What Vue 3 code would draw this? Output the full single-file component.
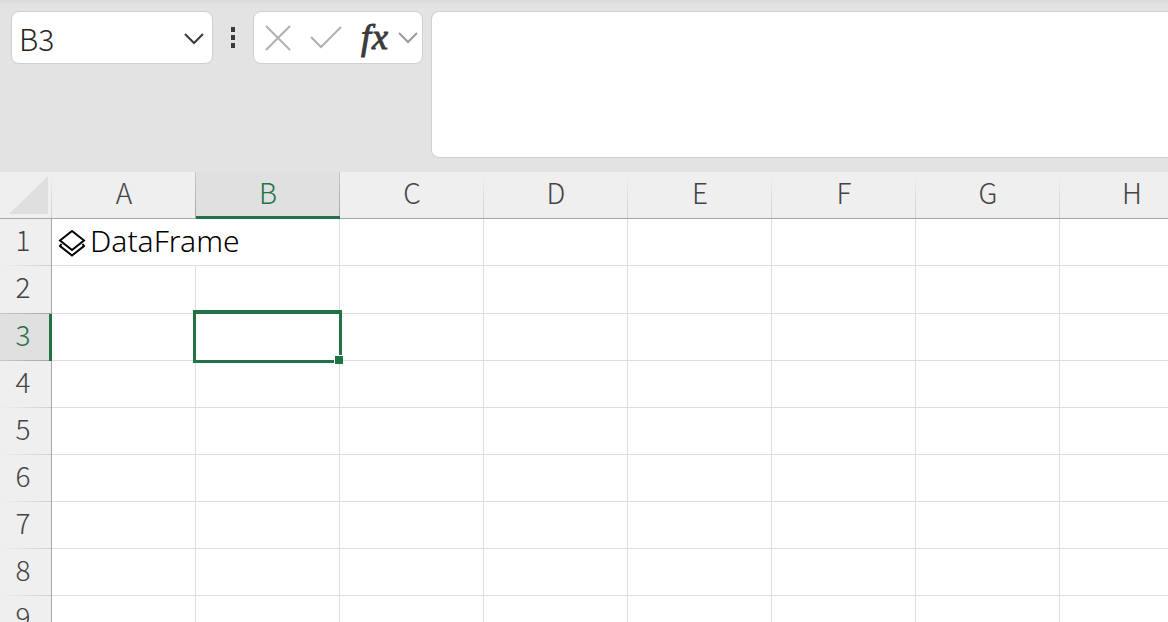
<script setup>
import { ref } from 'vue'

const columns = ['A', 'B', 'C', 'D', 'E', 'F', 'G', 'H']
const rows = [1, 2, 3, 4, 5, 6, 7, 8, 9]
const active = { column: 'B', row: 3 }
const cellName = ref('B3')
const formula = ref('')
</script>

<template>
  <main class="app">
    <header class="bar">
      <div class="name-box">
        <input v-model="cellName" class="name-input" type="text" aria-label="Name box" />
        <button class="icon-button name-toggle" type="button" aria-label="Show names">
          <svg width="22" height="14" viewBox="0 0 22 14"><path d="M2 2l9 9 9-9" fill="none" stroke="#3b3b3b" stroke-width="2" /></svg>
        </button>
      </div>
      <svg class="grip" width="6" height="22" viewBox="0 0 6 22"><path d="M1 0h4v5h-4zM1 8h4v5h-4zM1 16h4v5h-4z" fill="#3b3b3b" /></svg>
      <div class="actions">
        <button class="icon-button" type="button" aria-label="Cancel">
          <svg width="26" height="26" viewBox="0 0 26 26"><path d="M1 1l24 24M25 1L1 25" fill="none" stroke="#b0b0b0" stroke-width="2" /></svg>
        </button>
        <button class="icon-button" type="button" aria-label="Enter">
          <svg width="34" height="26" viewBox="0 0 34 26"><path d="M2 12l10 10L32 2" fill="none" stroke="#b0b0b0" stroke-width="2" /></svg>
        </button>
        <button class="icon-button fx" type="button" aria-label="Insert function"><span>f</span><span>x</span></button>
        <button class="icon-button more" type="button" aria-label="More functions">
          <svg width="20" height="14" viewBox="0 0 20 14"><path d="M1 2l9 9 9-9" fill="none" stroke="#9a9a9a" stroke-width="2" /></svg>
        </button>
      </div>
      <textarea v-model="formula" class="formula" aria-label="Formula bar"></textarea>
    </header>

    <table class="sheet">
      <thead>
        <tr>
          <th class="corner">
            <svg width="40" height="40" viewBox="0 0 40 40"><path d="M40 1v38H1z" fill="#dfdfdf" /></svg>
          </th>
          <th v-for="c in columns" :key="c" class="column" scope="col" :class="{ current: c === active.column, before: c === 'A' }">{{ c }}</th>
        </tr>
      </thead>
      <tbody>
        <tr v-for="r in rows" :key="r">
          <th class="row" scope="row" :class="{ current: r === active.row, before: r === active.row - 1 }">{{ r }}</th>
          <td v-for="c in columns" :key="c" :class="{ spill: r === 1 && c === 'A', active: r === active.row && c === active.column }">
            <div v-if="r === 1 && c === 'A'" class="object">
              <svg width="28" height="30" viewBox="0 0 28 30"><path d="M14 3l12 9.500-12 9.500-12-9.500zM3.500 16l-1.500 2 12 9.500 12-9.500-1.500-2" fill="none" stroke="#000" stroke-width="2" /></svg>
              <span class="label">DataFrame</span>
            </div>
            <div v-if="r === active.row && c === active.column" class="selection"><i class="handle"></i></div>
          </td>
        </tr>
      </tbody>
    </table>
  </main>
</template>

<style>
body {
  margin: 0;
}
</style>

<style scoped>
.app {
  height: 100vh;
  overflow: hidden;
  background: #fff;
  color: #444;
  font-family: "Noto Sans CJK JP", "Noto Sans", sans-serif;
  font-size: 28px;
  font-weight: 300;
}
.bar {
  display: flex;
  align-items: flex-start;
  box-sizing: border-box;
  height: 172px;
  padding: 11px 0 14px 11px;
  background: linear-gradient(#dadada, #e3e3e3 5px);
}
.name-box,
.actions {
  display: flex;
  align-items: center;
  box-sizing: border-box;
  height: 53px;
  border: 1px solid #d0d0d0;
  border-radius: 8px;
  background: #fff;
}
.name-box {
  width: 202px;
  padding: 0 7px;
}
.name-input {
  flex: 1;
  min-width: 0;
  height: 40px;
  padding: 0;
  border: 0;
  outline: 0;
  background: none;
  color: #262626;
  font: inherit;
  font-size: 30px;
}
.name-toggle {
  margin-top: 2px;
}
.icon-button {
  display: flex;
  padding: 0;
  border: 0;
  background: none;
}
.grip {
  margin: 16px 17px 0;
}
.actions {
  width: 170px;
  padding: 0 2px 0 11px;
  gap: 18px;
}
.fx {
  gap: 1px;
  margin-bottom: 2px;
  color: #3b3b3b;
  font: italic 400 36px/40px "Liberation Serif", serif;
  -webkit-text-stroke: 1px #3b3b3b;
}
.actions .more {
  margin-left: -8px;
}
.formula {
  flex: 1;
  box-sizing: border-box;
  height: 147px;
  margin-left: 8px;
  padding: 8px;
  border: 1px solid #d0d0d0;
  border-right: 0;
  border-radius: 8px 0 0 8px;
  outline: 0;
  resize: none;
  background: #fff;
  font: inherit;
}
.sheet {
  width: 1204px;
  border-spacing: 0;
  table-layout: fixed;
}
.sheet th,
.sheet td {
  box-sizing: border-box;
  height: 47px;
  padding: 0;
  font-weight: 300;
  line-height: 36px;
}
.sheet tbody tr:nth-child(2) > * {
  height: 48px;
}
.sheet td {
  border-right: 1px solid #dedede;
  border-bottom: 1px solid #dedede;
}
.sheet td.spill {
  border-right-color: #fff;
}
.sheet td.active {
  position: relative;
  z-index: 1;
}
thead th {
  width: 144px;
  border-bottom: 1px solid #a6a6a6;
  background: linear-gradient(#efefef, #d0d0d0) right / 1px 100% no-repeat #efefef;
}
.sheet th.column {
  padding-bottom: 6px;
}
thead th.before,
thead th.current {
  background-image: linear-gradient(#c8c8c8, #a6a6a6);
}
.sheet th.column.current {
  padding-bottom: 4px;
  border-bottom: 3px solid #217346;
  background-color: #e0e0e0;
  color: #217346;
}
.sheet th.corner {
  width: 52px;
  line-height: 0;
  text-align: right;
}
.corner svg {
  margin-right: 4px;
}
.sheet th.row {
  padding: 0 5px 8px 0;
  border-right: 1px solid #a6a6a6;
  background: linear-gradient(90deg, #efefef, #d0d0d0) bottom / 100% 1px no-repeat #efefef;
}
.sheet th.row.before,
.sheet th.row.current {
  background-image: linear-gradient(90deg, #c8c8c8, #a6a6a6);
}
.sheet th.row.current {
  padding-right: 3px;
  border-right: 3px solid #217346;
  background-color: #e0e0e0;
  color: #217346;
}
.object {
  display: flex;
  align-items: center;
  gap: 4px;
  padding: 2px 0 0 6px;
  color: #000;
  white-space: nowrap;
}
.object svg {
  flex: none;
}
.label {
  padding-bottom: 4px;
  font-family: "Noto Sans", sans-serif;
  font-size: 30px;
}
.selection {
  position: absolute;
  inset: -4px -3px -3px -3px;
  border: 3px solid #217346;
  border-top-width: 4px;
}
.handle {
  position: absolute;
  right: -4px;
  bottom: -4px;
  width: 8px;
  height: 8px;
  border: solid #fff;
  border-width: 1px 0 0 1px;
  background: #217346;
}
</style>
